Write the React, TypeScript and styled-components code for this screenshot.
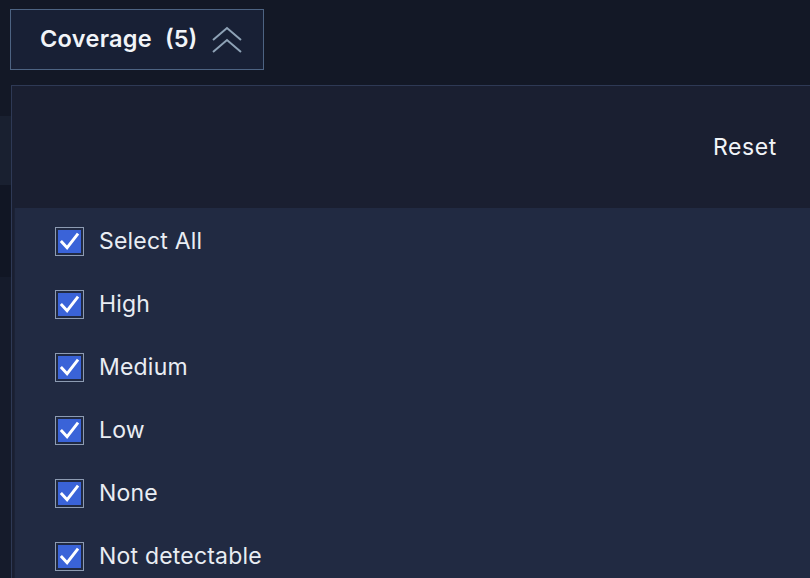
import { useState } from "react";
import styled, { createGlobalStyle } from "styled-components";

const GlobalStyle = createGlobalStyle`
  html, body {
    margin: 0;
    padding: 0;
    height: 100%;
  }
  body {
    background: linear-gradient(
      to bottom,
      #131826 0px,
      #131826 116px,
      #192030 116px,
      #192030 185px,
      #111624 185px,
      #111624 277px,
      #151b2b 277px
    );
    font-family: Inter, "Open Sans", sans-serif;
    overflow: hidden;
  }
`;

const items = ["High", "Medium", "Low", "None", "Not detectable"];

export default function App() {
  const [checked, setChecked] = useState<string[]>(items);
  const allChecked = checked.length === items.length;

  const toggle = (name: string) => {
    setChecked((prev) =>
      prev.includes(name) ? prev.filter((n) => n !== name) : [...prev, name]
    );
  };

  return (
    <Page>
      <GlobalStyle />
      <FilterButton>
        <Label>Coverage</Label>
        <Count>({checked.length})</Count>
        <Chevrons width="32" height="28" viewBox="0 0 32 28">
          <path d="M2 14 L16 2 L30 14" />
          <path d="M2 26 L16 14 L30 26" />
        </Chevrons>
      </FilterButton>

      <Panel>
        <PanelHeader>
          <ResetButton onClick={() => setChecked(items)}>Reset</ResetButton>
        </PanelHeader>
        <List>
          <Row>
            <Box
              $on={allChecked}
              onClick={() => setChecked(allChecked ? [] : items)}
            >
              {allChecked && <Check />}
            </Box>
            <RowText>Select All</RowText>
          </Row>
          {items.map((name) => (
            <Row key={name}>
              <Box $on={checked.includes(name)} onClick={() => toggle(name)}>
                {checked.includes(name) && <Check />}
              </Box>
              <RowText>{name}</RowText>
            </Row>
          ))}
        </List>
      </Panel>
    </Page>
  );
}

function Check() {
  return (
    <CheckSvg viewBox="0 0 24 24" width="23" height="23">
      <path d="M4 12.5 L9.5 18.5 L20 5" />
    </CheckSvg>
  );
}

const Page = styled.div`
  display: flex;
  flex-direction: column;
  align-items: flex-start;
  padding: 9px 0 0 10px;
  height: 578px;
  box-sizing: border-box;
`;

const FilterButton = styled.button`
  display: flex;
  align-items: center;
  width: 254px;
  height: 61px;
  box-sizing: border-box;
  padding: 0 0 3px 29px;
  background: #182035;
  border: 1px solid #4d6382;
  color: #f1f4f8;
  cursor: pointer;
  font-family: inherit;
`;

const Label = styled.span`
  font-size: 23.5px;
  font-weight: 600;
  letter-spacing: 0.3px;
`;

const Count = styled.span`
  font-size: 23.5px;
  font-weight: 600;
  margin-left: 13px;
`;

const Chevrons = styled.svg`
  margin-left: 14px;
  margin-top: 3px;
  fill: none;
  stroke: #8ea2b6;
  stroke-width: 2;
`;

const Panel = styled.div`
  margin: 15px 0 0 1px;
  width: 820px;
  flex: 1;
  display: flex;
  flex-direction: column;
  border-top: 1px solid #2e3955;
  border-left: 1px solid #2e3955;
  background: #1a1f31;
`;

const PanelHeader = styled.div`
  height: 122px;
  display: flex;
  align-items: center;
  justify-content: flex-end;
  padding-right: 55px;
  box-sizing: border-box;
  background: #1a1f31;
`;

const ResetButton = styled.button`
  background: none;
  border: none;
  color: #f1f4f8;
  font-family: inherit;
  font-size: 23px;
  letter-spacing: 0.6px;
  padding: 0;
  cursor: pointer;
`;

const List = styled.div`
  flex: 1;
  display: flex;
  flex-direction: column;
  gap: 35px;
  padding: 19px 0 0 40px;
  margin-left: 2px;
  background: #212a42;
  border-left: 1px solid #1b2236;
`;

const Row = styled.div`
  display: flex;
  align-items: center;
  gap: 15px;
  height: 28px;
`;

const Box = styled.div<{ $on: boolean }>`
  width: 29px;
  height: 29px;
  box-sizing: border-box;
  border: 1px solid #8d9bb2;
  padding: 2px;
  display: flex;
  cursor: pointer;
  & > svg {
    background: ${(p) => (p.$on ? "#3a63d8" : "transparent")};
  }
`;

const CheckSvg = styled.svg`
  fill: none;
  stroke: #ffffff;
  stroke-width: 3;
  stroke-linecap: square;
`;

const RowText = styled.span`
  color: #e9edf3;
  font-size: 23px;
  font-weight: 400;
  letter-spacing: 0.2px;
`;
